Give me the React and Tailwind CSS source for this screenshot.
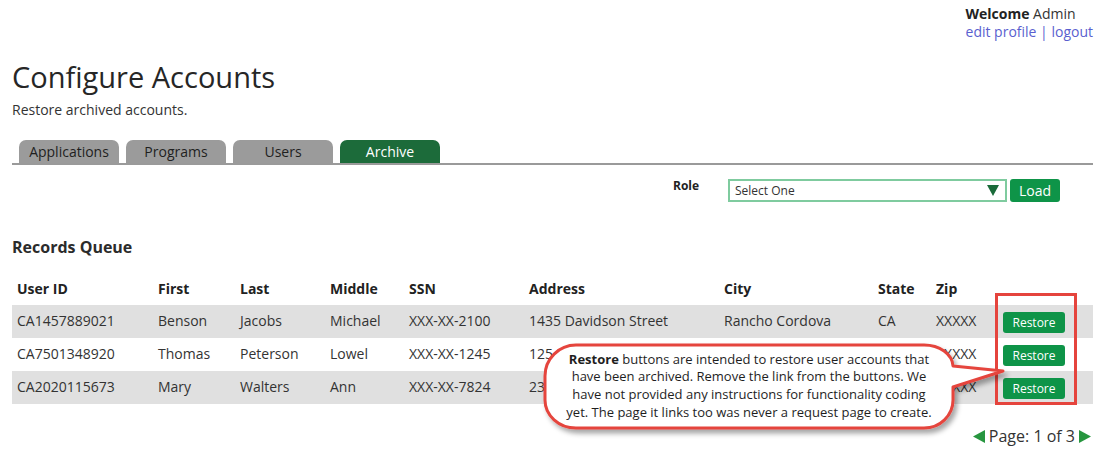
import React from "react";

const cols = "grid grid-cols-[141px_82px_90px_79px_120px_195px_154px_58px_68px_94px]";

const rows = [
  ["CA1457889021", "Benson", "Jacobs", "Michael", "XXX-XX-2100", "1435 Davidson Street", "Rancho Cordova", "CA", "XXXXX"],
  ["CA7501348920", "Thomas", "Peterson", "Lowel", "XXX-XX-1245", "125 Main Street", "Sacramento", "CA", "XXXXX"],
  ["CA2020115673", "Mary", "Walters", "Ann", "XXX-XX-7824", "23 Oak Avenue", "Folsom", "CA", "XXXXX"],
];

const headers = ["User ID", "First", "Last", "Middle", "SSN", "Address", "City", "State", "Zip", ""];

function Tab({ label, active }) {
  return (
    <div
      className={
        "h-[23px] w-[100px] rounded-t-[7px] text-center text-[14px] leading-[24px] " +
        (active ? "bg-[#1c6b3a] text-white" : "bg-[#9b9b9b] text-[#1f1f1f]")
      }
    >
      {label}
    </div>
  );
}

export default function App() {
  return (
    <div className="relative h-[476px] w-[1112px] overflow-hidden bg-white pl-[12px] pr-[19px] font-['Open_Sans',sans-serif] text-[#333]">
      {/* header */}
      <div className="flex justify-end pt-[5px]">
        <div className="text-[14px] leading-[18px]">
          <div>
            <span className="font-bold text-[#222]">Welcome</span> Admin
          </div>
          <div className="text-[#5a5fcf]">
            edit profile <span>|</span> logout
          </div>
        </div>
      </div>

      <h1 className="mt-[18px] text-[29px] font-medium leading-[36px] text-[#262626]">Configure Accounts</h1>
      <p className="mt-[6px] text-[14px] leading-[18px]">Restore archived accounts.</p>

      {/* tabs */}
      <div className="mt-[21px] flex gap-[7px] pl-[7px]">
        <Tab label="Applications" />
        <Tab label="Programs" />
        <Tab label="Users" />
        <Tab label="Archive" active />
      </div>
      <div className="h-[2px] bg-[#9a9a9a]" />

      {/* role row */}
      <div className="mt-[14px] flex items-start justify-end pr-[33px]">
        <div className="w-[55px] text-[12px] font-bold leading-[14px] text-[#222]">Role</div>
        <div className="flex h-[23px] w-[279px] items-center justify-between border-2 border-[#7fcb9f] pl-[5px] pr-[6px] text-[12px] text-[#333]">
          <span>Select One</span>
          <svg width="12" height="11" viewBox="0 0 12 11">
            <path d="M0 0 H12 L6 11 Z" fill="#1a6b3a" />
          </svg>
        </div>
        <button className="ml-[3px] h-[23px] w-[50px] rounded-[3px] bg-[#0e9448] text-[14px] leading-[23px] text-white">
          Load
        </button>
      </div>

      <h2 className="mt-[34px] text-[16px] font-bold leading-[22px] text-[#2b2b2b]">Records Queue</h2>

      {/* table */}
      <div className="mt-[17px]">
        <div className={cols + " h-[30px] items-center pb-[3px] text-[14px] font-bold text-[#222]"}>
          {headers.map((h, i) => (
            <div key={i} className="pl-[5px]">
              {h}
            </div>
          ))}
        </div>
        {rows.map((r, ri) => (
          <div
            key={ri}
            className={cols + " h-[33px] items-center pb-[2px] text-[14px] " + (ri % 2 === 0 ? "bg-[#e0e0e0]" : "bg-white")}
          >
            {r.map((c, ci) => (
              <div key={ci} className="whitespace-nowrap pl-[5px]">
                {c}
              </div>
            ))}
            <div className="pl-[4px] pt-[2px]">
              <button className="h-[21px] w-[62px] rounded-[3px] bg-[#0e9448] text-[12px] leading-[21px] text-white">
                Restore
              </button>
            </div>
          </div>
        ))}
      </div>

      {/* pagination */}
      <div className="mt-[22px] flex items-center justify-end gap-[4px] pr-[2px] text-[16px] leading-[20px] text-[#333]">
        <svg width="12" height="13" viewBox="0 0 12 13">
          <path d="M12 0 V13 L0 6.5 Z" fill="#27963f" />
        </svg>
        <span>Page: 1 of 3</span>
        <svg width="12" height="13" viewBox="0 0 12 13">
          <path d="M0 0 V13 L12 6.5 Z" fill="#27963f" />
        </svg>
      </div>

      {/* annotation: red box */}
      <div className="absolute left-[995px] top-[293px] h-[112px] w-[82px] border-[3px] border-[#e5443d]" />

      {/* annotation: callout */}
      <svg className="pointer-events-none absolute left-0 top-0" width="1112" height="476" viewBox="0 0 1112 476">
        <defs>
          <filter id="sh" x="-10%" y="-20%" width="130%" height="160%">
            <feDropShadow dx="3" dy="4" stdDeviation="2.5" floodColor="#000" floodOpacity="0.35" />
          </filter>
        </defs>
        <path
          d="M576 345 H924 A29 22 0 0 1 953 366 L1003 371 L953 387 V400 A29 28 0 0 1 924 428 H576 A31 28 0 0 1 545 400 V376 A31 31 0 0 1 576 345 Z"
          fill="#fff"
          stroke="#e5443d"
          strokeWidth="3"
          strokeLinejoin="round"
          filter="url(#sh)"
        />
      </svg>
      <div className="absolute left-[545px] top-[350.5px] w-[408px] whitespace-nowrap text-center text-[13px] leading-[17.7px] text-[#1e1e1e]">
        <span className="font-bold">Restore</span> buttons are intended to restore user accounts that
        <br />
        have been archived. Remove the link from the buttons. We
        <br />
        have not provided any instructions for functionality coding
        <br />
        yet. The page it links too was never a request page to create.
      </div>
    </div>
  );
}
